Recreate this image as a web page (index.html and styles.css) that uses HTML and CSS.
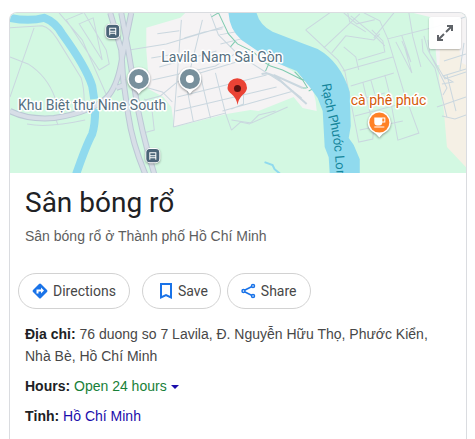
FILE: index.html
```html
<!DOCTYPE html>
<html lang="vi">
<head>
<meta charset="utf-8">
<meta name="viewport" content="width=device-width, initial-scale=1">
<title>Sân bóng rổ</title>
<link rel="stylesheet" href="styles.css">
</head>
<body>
<main class="card">
  <div class="map">
    <svg class="map-art" viewBox="10 13 455 160" preserveAspectRatio="xMidYMid slice" role="img" aria-label="Map">
      <rect class="park" x="10" y="13" width="455" height="160"/>
      <path class="urban" d="M185 13L180 18L146 28V50L148 75L146 86L150 90L163 97L171 107L174 127L226 114L250 110L258 111L293 97L302 108L316 111L315 101L312 89L306 80L290 70L270 57L255 46L240 32L230 13Z"/>
      <path class="urban" d="M412 13L432 18L436 65L465 66V13Z"/>
      <path class="sand" d="M439 49H458L461 63L465 65V167L446 147L443 112L438 78Z"/>

      <g class="street">
        <path d="M10 28L42 26Q50 28 57 39L81 78Q84 88 84 101M34 28L10 97M10 57L28 64Q47 76 55 98M59 13L82 40L108 99M66 20L99 70L109 64L106 50L84 13M79 24L93 18L102 60ZM66 20L83 13"/>
        <path d="M27 124Q48 128 85 120M56 120L58 125"/>
        <path d="M129 50L166 44L223 27M157 34L179 31M184 38L204 32L222 29M151 58L169 55M152 80L215 66L236 53M159 67L216 51M145 100L160 96L177 82L193 75L236 62M148 88L162 92L172 102M181 20L173 127M202 20L190 69M173 127L225 113L231 130M185 80L193 122M200 76L210 118M215 73L225 113M177 97L266 75M175 111L276 87M222 111L293 91M210 14L218 35L238 55L279 81L301 98M219 35L241 31M220 44L245 38M231 109L243 104V92M231 130L240 122L249 124L258 115L275 111"/>
        <path d="M144 99L151 104L154 130L143 133M231 120L244 122L251 123L287 107"/>
        <path d="M305 30L337 60L344 71L358 142L372 139L373 124M305 30L329 13M323 48L359 14M331 53L345 36L373 40L379 34M347 13L349 22L365 32M350 16L374 36L384 46M343 13L356 24L374 20M357 60L384 52L382 41L371 30M343 47L355 57L358 70M342 71L392 57M350 86L393 73M353 101L384 93M354 116L400 104M359 130L402 121M362 82L370 116M370 80L374 94M384 75L388 91L397 140L418 133L403 92L387 39L379 21L363 13M387 39L435 27L465 17M395 42L411 73L404 48M401 41L410 62L401 36M408 13L412 37L420 67M393 13L373 38"/>
        <path d="M421 39L422 52L434 68L446 117M423 36L427 50L446 88L442 95M427 40L429 54L444 79L465 72M443 61L465 54M441 84L452 82L442 76L465 69M436 107L465 97M441 116L454 119L465 115M446 75L455 111M463 43L459 70"/>
      </g>
      <path class="street wide" d="M261 74Q269 72 278 79L306 104M273 75L302 88"/>

      <path class="trail" d="M211 17L218 13L228 34L237 44L253 52L263 62L270 66L282 70L302 80L307 88M230 47L235 41M265 71L269 62M294 72L301 79L307 81L312 89L308 91M302 88L306 88"/>

      <path class="highway-edge" d="M10 111Q28 120 54 118Q93 112 108 96Q118 84 122 57L131 13M110 13L121 50L123 80L128 115Q132 143 145 174M121 13L128 50L135 93Q140 128 154 174M116 88L124 85"/>
      <path class="highway" d="M10 111Q28 120 54 118Q93 112 108 96Q118 84 122 57L131 13M110 13L121 50L123 80L128 115Q132 143 145 174M121 13L128 50L135 93Q140 128 154 174M116 88L124 85"/>

      <path class="water" d="M10 18Q29 22 44 18Q55 22 62 34Q86 67 92 86L94 99M95 109Q95 125 92 134Q86 145 76 174"/>
      <path class="river" d="M228 13H256Q259 25 272 32L301 43L317 49Q340 62 349 92L350 126L348 138L353 145L359 159V173H329L328 157L324 147L322 111L317 98L309 87L296 71L274 62L260 53L241 40Q229 30 228 13Z"/>
      <path class="creek" d="M264 162L272 165L274 169L280 174"/>

      <g class="stop" transform="translate(112.500 31.500)">
        <rect x="-7" y="-7" width="14" height="14" rx="4"/>
        <path d="M-3 3V-3H3V3M-3 0H3M-3 2H3M-3 3V4M3 3V4"/>
      </g>
      <g class="stop" transform="translate(152.500 155.500)">
        <rect x="-7" y="-7" width="14" height="14" rx="4"/>
        <path d="M-3 3V-3H3V3M-3 0H3M-3 2H3M-3 3V4M3 3V4"/>
      </g>

      <g class="place" transform="translate(138.500 79)">
        <path class="pin-rim" d="M0 15Q-3 11-7 9A11.500 11.500 0 1 1 7 9Q3 11 0 15Z"/>
        <circle class="pin-fill" r="10"/><circle class="pin-hole" r="4"/>
      </g>
      <g class="place" transform="translate(189.500 79)">
        <path class="pin-rim" d="M0 15Q-3 11-7 9A11.500 11.500 0 1 1 7 9Q3 11 0 15Z"/>
        <circle class="pin-fill" r="10"/><circle class="pin-hole" r="4"/>
      </g>
      <g class="place" transform="translate(378.500 122.500)">
        <path class="pin-rim" d="M0 15Q-3 11-7 9A11.500 11.500 0 1 1 7 9Q3 11 0 15Z"/>
        <circle class="cafe-fill" r="10"/>
        <path class="pin-hole" d="M-5-5H6V0H3Q3 3 0 3H-2Q-5 3-5 0ZM3-4V-1H5V-4ZM-5 4H5V5H-5Z" fill-rule="evenodd"/>
      </g>
      <path class="target" d="M237 105Q236 98 231 94Q227 91 227 88A9.500 9.500 0 0 1 246.500 88Q246 92 242 95Q238 99 237 105Z"/>
      <circle class="target-dot" cx="237" cy="88.500" r="3.500"/>

      <text class="label" x="161" y="62">Lavila Nam Sài Gòn</text>
      <text class="label" x="18" y="110">Khu Biệt thự Nine South</text>
      <text class="label cafe" x="350" y="105">cà phê phúc</text>
      <path id="river-line" d="M321 84Q325 108 330 126Q335 148 337 200" fill="none"/>
      <text class="river-label"><textPath href="#river-line">Rạch Phước Long</textPath></text>
    </svg>
    <button class="expand" type="button" aria-label="Expand map">
      <svg viewBox="0 0 18 18" width="18" height="18"><path d="M11 2H16V7M16 2L10 8M2 11V16H7M2 16L8 10"/></svg>
    </button>
  </div>

  <header class="heading">
    <h1>Sân bóng rổ</h1>
    <p>Sân bóng rổ ở Thành phố Hồ Chí Minh</p>
  </header>

  <div class="actions">
    <button class="chip directions" type="button">
      <svg viewBox="0 0 16 16" width="16" height="16"><path class="solid" d="M7 1Q8 0 9 1L15 7Q16 8 15 9L9 15Q8 16 7 15L1 9Q0 8 1 7Z"/><path class="arrow" d="M5.500 10.500V7.500H9.500"/><path class="arrow-head" d="M9 4.500L12 7.500L9 10.500Z"/></svg>
      Directions
    </button>
    <button class="chip save" type="button">
      <svg viewBox="0 0 14 18" width="14" height="18"><path class="line" d="M2 2H12V15.500L7 13L2 15.500Z"/></svg>
      Save
    </button>
    <button class="chip share" type="button">
      <svg viewBox="0 0 15 16" width="15" height="16"><path class="line thin" d="M4 7L11 3.500M4 9L11 12.500"/><circle class="line thin" cx="2.500" cy="8" r="1.500"/><circle class="line thin" cx="12" cy="3" r="1.500"/><circle class="line thin" cx="12" cy="13" r="1.500"/></svg>
      Share
    </button>
  </div>

  <div class="facts">
    <p><b>Địa chỉ:</b> 76 duong so 7 Lavila, Đ. Nguyễn Hữu Thọ, Phước Kiển, Nhà Bè, Hồ Chí Minh</p>
    <p><b>Hours:</b> <button class="hours" type="button">Open 24 hours<span class="caret"></span></button></p>
    <p><b>Tỉnh:</b> <a href="#">Hồ Chí Minh</a></p>
  </div>
</main>
</body>
</html>
```

FILE: styles.css
```css
* {
  box-sizing: border-box;
}

body {
  margin: 12px 8px 0 9px;
  background: #fff;
  color: #474747;
  font: 14px/22px "Liberation Sans", Arial, sans-serif;
}

h1,
p {
  margin: 0;
}

button {
  font: inherit;
  cursor: pointer;
}

.card {
  min-height: calc(100vh - 12px);
  border: 1px solid #dadce0;
  border-bottom: 0;
  border-radius: 8px 8px 0 0;
  overflow: hidden;
}

/* Map */
.map {
  position: relative;
  height: 160px;
}

.map-art {
  display: block;
  width: 100%;
  height: 100%;
}

.park { fill: #d3f8e2; }
.urban { fill: #f5f3f4; }
.sand { fill: #f5f0e5; }
.river { fill: #90daee; }

.street {
  fill: none;
  stroke: #cad7df;
  stroke-width: 1;
}

.street.wide {
  stroke-width: 2;
}

.trail {
  fill: none;
  stroke: #7fcbb0;
  stroke-width: 1;
}

.water {
  fill: none;
  stroke: #90daee;
  stroke-width: 8;
}

.creek {
  fill: none;
  stroke: #90daee;
  stroke-width: 2;
}

.highway-edge {
  fill: none;
  stroke: #bcc8d5;
  stroke-width: 6;
}

.highway {
  fill: none;
  stroke: #d7dee7;
  stroke-width: 4;
}

.stop {
  filter: drop-shadow(0 1px 1px #0005);
}

.stop rect {
  fill: #4b6478;
  stroke: #fff;
  stroke-width: 1;
}

.stop path {
  fill: none;
  stroke: #fff;
  stroke-width: 1;
}

.place {
  filter: drop-shadow(0 1px 1px #0006);
}

.pin-rim,
.pin-hole { fill: #fff; }
.pin-fill { fill: #78909c; }
.cafe-fill { fill: #ff8126; }
.target { fill: #ea4335; }
.target-dot { fill: #5b1210; }

.label {
  fill: #56707f;
  stroke: #fff;
  stroke-width: 3px;
  stroke-linejoin: round;
  paint-order: stroke;
  font: 14px Roboto, sans-serif;
}

.label.cafe {
  fill: #d45b0a;
}

.river-label {
  fill: #16869c;
  font: 13px Roboto, sans-serif;
}

.expand {
  position: absolute;
  top: 4px;
  right: 5px;
  display: grid;
  place-items: center;
  width: 32px;
  height: 32px;
  padding: 0;
  border: 0;
  border-radius: 2px;
  background: #fffffff0;
  box-shadow: 0 1px 2px #0004;
}

.expand path {
  fill: none;
  stroke: #5f6368;
  stroke-width: 2;
}

/* Title */
.heading {
  padding: 12px 15px 0;
}

h1 {
  color: #202124;
  font: 400 28px/36px Roboto, sans-serif;
}

.heading p {
  padding-top: 4px;
  color: #5e5e5e;
}

/* Action chips */
.actions {
  display: flex;
  gap: 6px;
  padding: 26px 8px 0;
}

.chip {
  display: flex;
  align-items: center;
  gap: 5px;
  height: 36px;
  padding: 0 13px;
  border: 1px solid #d2d2d2;
  border-radius: 18px;
  background: #fff;
  color: #474747;
  font: 14px/20px Roboto, sans-serif;
}

.directions {
  margin-right: 6px;
}

.save {
  padding: 0 12px 0 16px;
}

.solid { fill: #1a73e8; }

.arrow {
  fill: none;
  stroke: #fff;
  stroke-width: 2;
}

.arrow-head { fill: #fff; }

.line {
  fill: none;
  stroke: #1a73e8;
  stroke-width: 2;
}

.line.thin {
  stroke-width: 1.5;
}

/* Facts */
.facts {
  display: grid;
  gap: 8px;
  padding: 14px 15px 12px;
}

.facts b {
  color: #202124;
}

.hours {
  padding: 0;
  border: 0;
  background: none;
  color: #188038;
}

.caret {
  display: inline-block;
  margin-left: 4px;
  border: 4px solid transparent;
  border-top-color: #1a0dab;
  border-bottom: 0;
  vertical-align: middle;
}

.facts a {
  color: #1a0dab;
  text-decoration: none;
}
```
